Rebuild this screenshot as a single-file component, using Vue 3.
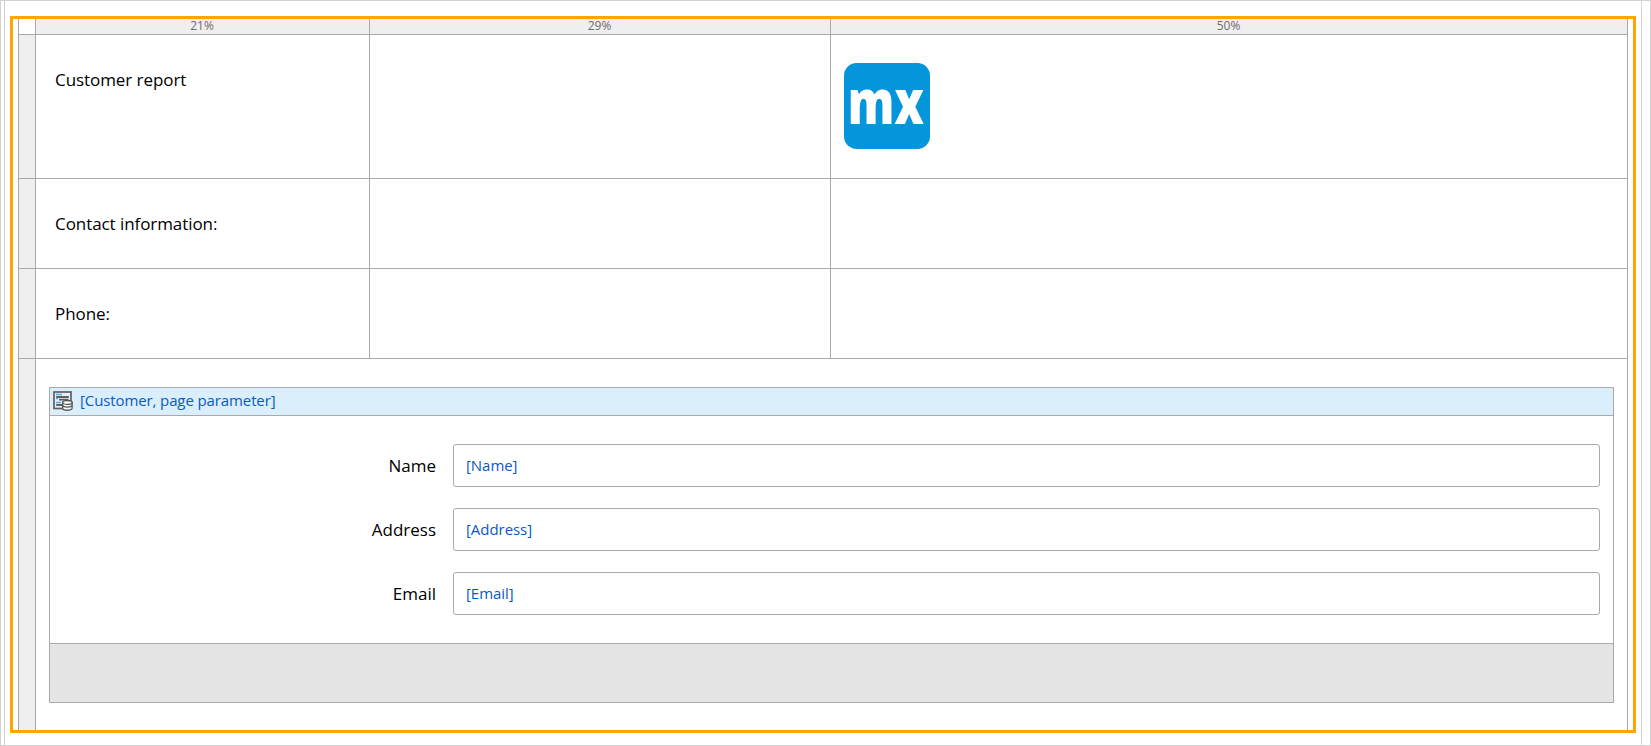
<script setup>
const columns = ['21%', '29%', '50%']
const rows = [
  { key: 'report', label: 'Customer report', logo: true },
  { key: 'contact', label: 'Contact information:' },
  { key: 'phone', label: 'Phone:' },
]
const fields = ['Name', 'Address', 'Email']
</script>

<template>
  <div class="canvas">
    <div class="page">
      <div class="selection">
        <div class="table">
          <div class="corner"></div>
          <div v-for="c in columns" :key="c" class="col-head"><span>{{ c }}</span></div>

          <template v-for="r in rows" :key="r.key">
            <div class="row-head"></div>
            <div class="cell text"><span>{{ r.label }}</span></div>
            <div class="cell"></div>
            <div class="cell logo-cell">
              <svg v-if="r.logo" class="logo" width="86" height="86" viewBox="0 0 86 86">
                <rect width="86" height="86" rx="12.5" fill="#0595db" />
                <text x="3.8" y="60.8" textLength="76" lengthAdjust="spacingAndGlyphs">mx</text>
              </svg>
            </div>
          </template>

          <div class="row-head last"></div>
          <div class="cell wide">
            <div class="dataview">
              <div class="dv-head">
                <svg class="icon" width="20" height="20" viewBox="0 0 20 20">
                  <rect x="1" y="1" width="17" height="16.5" fill="#e6eff6" stroke="#606060" stroke-width="1.7" />
                  <path d="M3 3.6h6M3 7.4h2M3 11.6h5" stroke="#4aaef0" stroke-width="1.5" />
                  <path d="M3.2 6h12.6M6 8.6h9.5M3.2 14h6" stroke="#606060" stroke-width="1.8" />
                  <path d="M9.7 11.5v5.8c0 2.6 9.4 2.6 9.4 0v-5.8z" fill="#fff" stroke="#555" stroke-width="1.3" />
                  <ellipse cx="14.4" cy="11.4" rx="4.7" ry="1.9" fill="#fff" stroke="#555" stroke-width="1.3" />
                  <path d="M9.7 14.3c0 2.4 9.4 2.4 9.4 0" fill="none" stroke="#555" stroke-width="1.3" />
                </svg>
                <span class="source">[Customer, page parameter]</span>
              </div>
              <div class="dv-body">
                <div v-for="f in fields" :key="f" class="field">
                  <label>{{ f }}</label>
                  <div class="input"><span>[{{ f }}]</span></div>
                </div>
              </div>
              <div class="dv-foot"></div>
            </div>
          </div>
        </div>
      </div>
    </div>
  </div>
</template>

<style>
body { margin: 0; background: #fff; }
</style>

<style scoped>
* { box-sizing: border-box; }
.canvas {
  width: 1651px;
  height: 746px;
  border: 1px solid #d3d3d3;
  padding: 0 8px 0 3px;
  font-family: "Open Sans", "Noto Sans", sans-serif;
  color: #000;
  overflow: hidden;
}
.page {
  height: 744px;
  border: solid #d3d3d3;
  border-width: 0 1px;
  padding: 15px 5px 0;
}
.selection {
  width: 1626px;
  height: 717px;
  border: 3px solid orange;
  padding: 0 5px;
}
.table {
  height: 711px;
  display: grid;
  grid-template-columns: 17px 334px 461px 797px;
  grid-template-rows: 16px 144px 90px 90px 1fr;
  border-left: 1px solid #a9a9a9;
}
.table > div { border-right: 1px solid #a9a9a9; border-bottom: 1px solid #a9a9a9; }
.col-head {
  background: #efefef;
  color: #6d6d6d;
  font-size: 12px;
  line-height: 12px;
  padding: 1px 1px 0 0;
  text-align: center;
}
.row-head { background: #efefef; }
.text {
  padding: 32px 0 0 19px;
  font-size: 17px;
  line-height: 25px;
  letter-spacing: -0.07px;
  white-space: nowrap;
}
.logo-cell { padding: 28px 0 0 13px; }
.logo { display: block; }
.logo text { font-family: "Open Sans", sans-serif; font-weight: 800; font-size: 62px; fill: #fff; }
.table > .last, .table > .wide { border-bottom: 0; }
.wide { grid-column: 2 / 5; padding: 28px 13px 0; }
.dataview { height: 316px; border: 1px solid #a9a9a9; }
.dv-head {
  height: 28px;
  background: #daeefc;
  border-bottom: 1px solid #a9a9a9;
  display: flex;
  align-items: center;
  padding: 0 0 1px 3px;
}
.source {
  margin: 0 0 2px 7px;
  font-size: 15px;
  line-height: 20px;
  letter-spacing: -0.11px;
  color: #0a5ac2;
}
.dv-body {
  height: 228px;
  border-bottom: 1px solid #a9a9a9;
  padding: 28px 13px 0 0;
  display: flex;
  flex-direction: column;
  gap: 21px;
}
.field { display: flex; height: 43px; align-items: center; }
.field label { width: 387px; padding-right: 1px; text-align: right; font-size: 17px; }
.input {
  margin-left: 16px;
  flex: 1;
  height: 43px;
  border: 1px solid #a9a9a9;
  border-radius: 3px;
  padding: 0 0 2px 12px;
  display: flex;
  align-items: center;
  font-size: 15px;
  letter-spacing: -0.05px;
  color: #0a5ac2;
}
.dv-foot { height: 58px; background: #e5e5e5; }
</style>
